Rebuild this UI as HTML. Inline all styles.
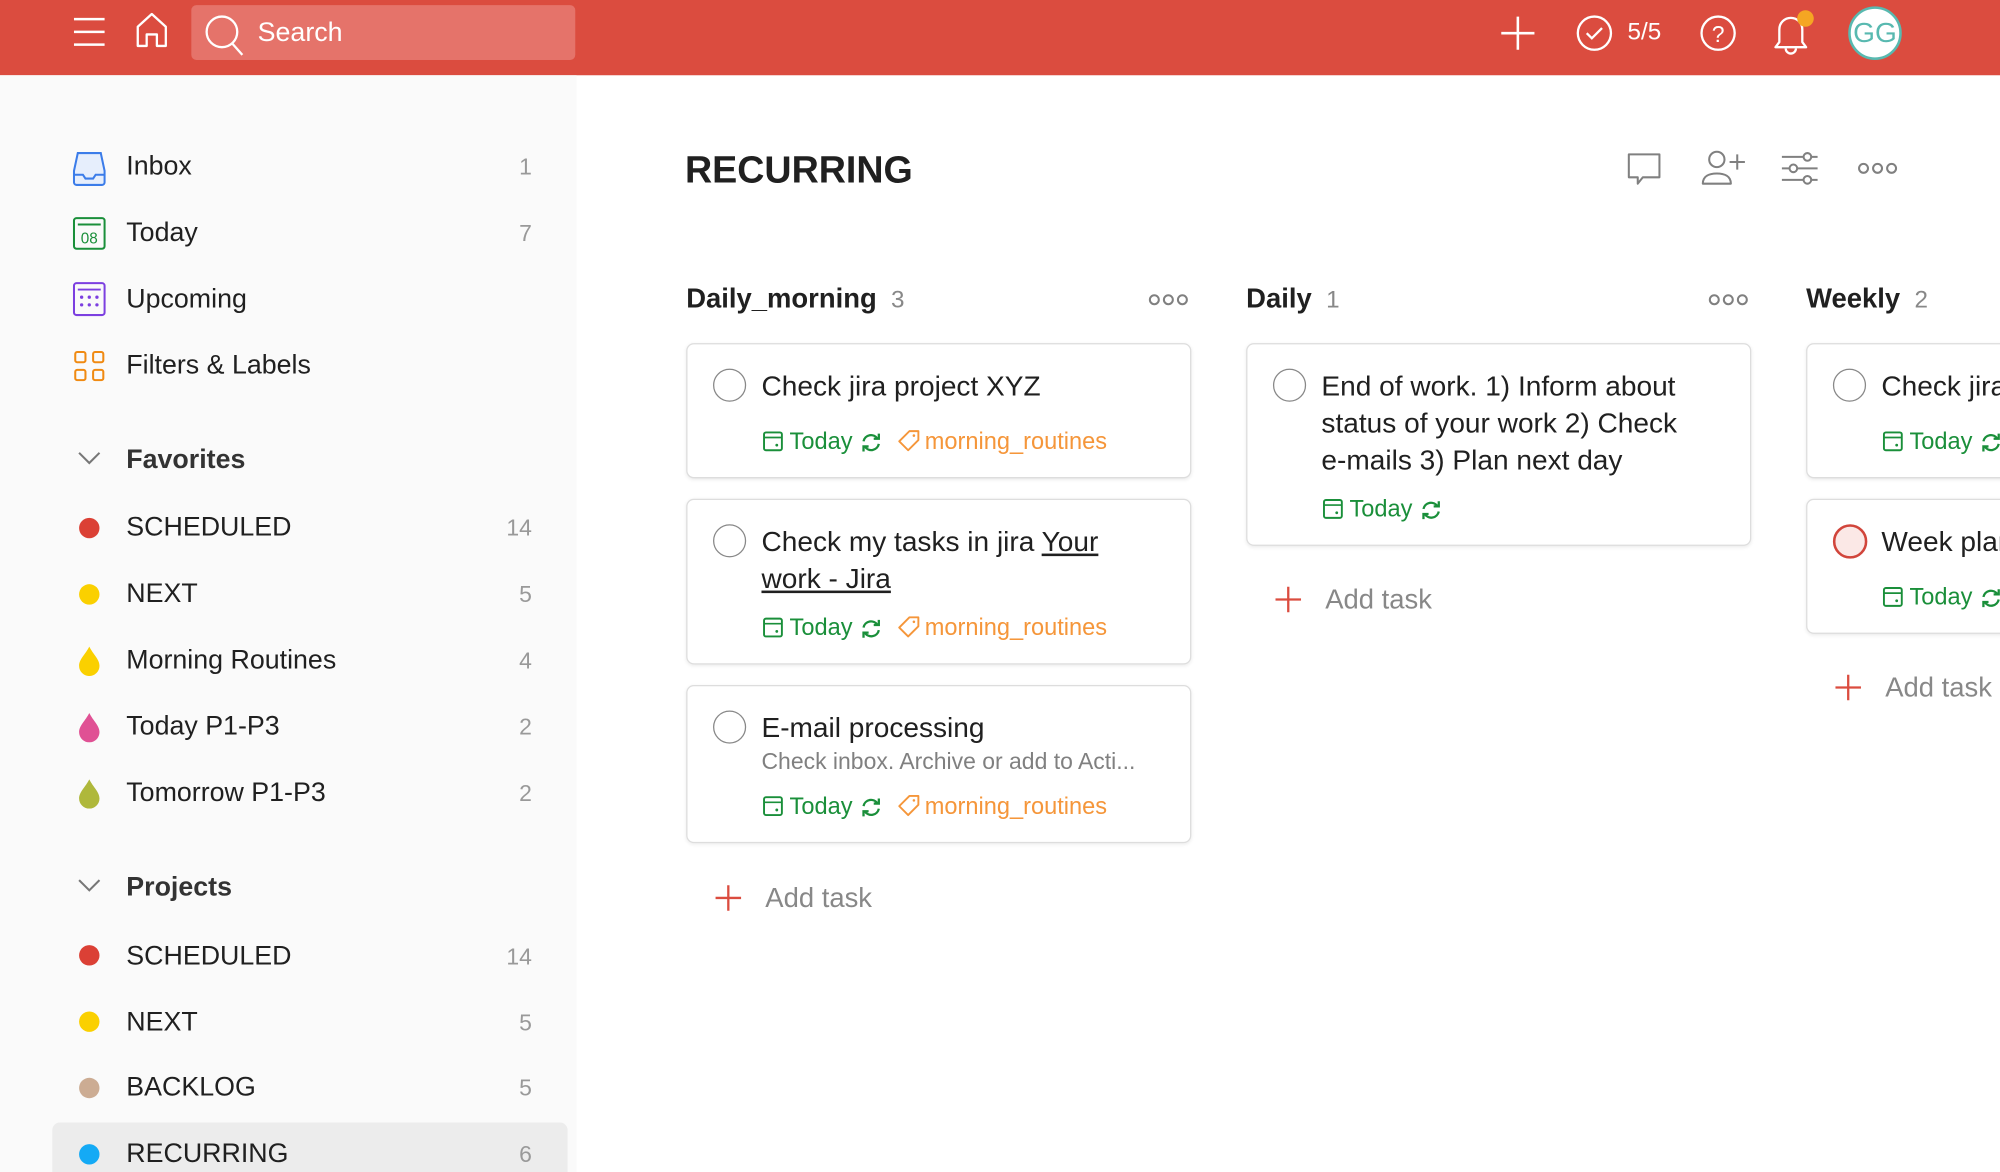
<!DOCTYPE html>
<html><head><meta charset="utf-8"><style>
html,body{margin:0;padding:0;width:2000px;height:1172px;overflow:hidden;background:#fff}
#w{position:absolute;left:0;top:0;width:1568px;height:919px;overflow:hidden;transform:scale(1.27551);transform-origin:0 0;font-family:"Liberation Sans",sans-serif;color:#202020}
.a{position:absolute}
.t{position:absolute;line-height:30px;height:30px;white-space:nowrap}
.sb{font-size:21px}
.cnt{position:absolute;font-size:18px;color:#999;line-height:30px;width:60px;text-align:right;left:357px}
.dot{position:absolute;width:16px;height:16px;border-radius:50%;left:62px}
.card{position:absolute;background:#fff;border:1px solid #ddd;border-radius:6px;box-shadow:0 1px 3px rgba(0,0,0,.08);width:394px}
.circ{position:absolute;width:24px;height:24px;border:1.6px solid #888;border-radius:50%}
.tt{font-size:22px;color:#202020}
.meta{font-size:18.5px;line-height:24px;height:24px}
.g{color:#1a8f3a}.o{color:#f5963a}
.colh{font-size:21.5px;font-weight:bold}
.add{font-size:21.5px;color:#888}
</style></head><body><div id="w">
<!-- header -->
<div class="a" style="left:0;top:0;width:1568px;height:59px;background:#db4c3f"></div>
<svg class="a" style="top:12px;left:56px" width="28" height="26" viewBox="0 0 28 26"><path d="M2 3h24M2 13h24M2 23h24" stroke="#fff" stroke-width="2"/></svg>
<svg class="a" style="left:104px;top:9px" width="30" height="30" viewBox="0 0 30 30"><path d="M4 27V12L15 2l11 10v15h-7v-9h-8v9z" fill="none" stroke="#fff" stroke-width="1.8" stroke-linejoin="round"/></svg>
<div class="a" style="left:150px;top:4px;width:301px;height:43px;background:#e5736a;border-radius:4px"></div>
<svg class="a" style="left:159px;top:11px" width="34" height="34" viewBox="0 0 34 34"><circle cx="15" cy="14" r="12" fill="none" stroke="#fff" stroke-width="1.8"/><path d="M23 23l8 9" stroke="#fff" stroke-width="1.8"/></svg>
<div class="t" style="left:202px;top:11px;font-size:21px;color:#fff">Search</div>
<svg class="a" style="left:1175px;top:11px" width="30" height="30" viewBox="0 0 30 30"><path d="M15 2v26M2 15h26" stroke="#fff" stroke-width="2"/></svg>
<svg class="a" style="left:1235px;top:11px" width="30" height="30" viewBox="0 0 30 30"><circle cx="15" cy="15" r="13" fill="none" stroke="#fff" stroke-width="1.8"/><path d="M9 15l4 4 8-8" fill="none" stroke="#fff" stroke-width="1.8"/></svg>
<div class="t" style="left:1276px;top:11px;font-size:19px;color:#fff">5/5</div>
<svg class="a" style="left:1332px;top:11px" width="30" height="30" viewBox="0 0 30 30"><circle cx="15" cy="15" r="13" fill="none" stroke="#fff" stroke-width="1.8"/><text x="15" y="22" text-anchor="middle" font-size="18" fill="#fff" font-family="Liberation Sans">?</text></svg>
<svg class="a" style="left:1388px;top:10px" width="32" height="34" viewBox="0 0 32 34"><path d="M4 27h24l-3-4V13a9 9 0 0 0-18 0v10z" fill="none" stroke="#fff" stroke-width="1.8" stroke-linejoin="round"/><path d="M12 28a4 4 0 0 0 8 0" fill="none" stroke="#fff" stroke-width="1.8"/></svg>
<div class="a" style="left:1409px;top:8px;width:13px;height:13px;border-radius:50%;background:#f5a623"></div>
<div class="a" style="left:1449px;top:5px;width:38px;height:38px;border-radius:50%;background:#fff;border:2px solid #58b9b0;color:#58b9b0;font-size:22px;line-height:38px;text-align:center">GG</div>
<!-- sidebar -->
<div class="a" style="left:0;top:59px;width:452px;height:860px;background:#fafafa"></div>
<svg class="a" style="left:57px;top:118px" width="26" height="28" viewBox="0 0 26 28"><path d="M4 2h18l3 14v9a2 2 0 0 1-2 2H3a2 2 0 0 1-2-2v-9z" fill="#e6eefc" stroke="#3b7ce9" stroke-width="1.6"/><path d="M1 19h7l2 3h6l2-3h7" fill="none" stroke="#3b7ce9" stroke-width="1.6"/></svg>
<div class="t sb" style="left:99px;top:116px">Inbox</div><div class="cnt" style="top:116px">1</div>
<svg class="a" style="left:57px;top:170px" width="26" height="26" viewBox="0 0 26 26"><rect x="1" y="1" width="24" height="24" rx="2" fill="none" stroke="#1a8f3a" stroke-width="1.6"/><path d="M4 6h18" stroke="#1a8f3a" stroke-width="1.5"/><text x="13" y="21" text-anchor="middle" font-size="12" fill="#1a8f3a" font-family="Liberation Sans">08</text></svg>
<div class="t sb" style="left:99px;top:168px">Today</div><div class="cnt" style="top:168px">7</div>
<svg class="a" style="left:57px;top:221px" width="26" height="27" viewBox="0 0 26 27"><rect x="1" y="1" width="24" height="25" rx="2" fill="none" stroke="#7c3fe0" stroke-width="1.6"/><path d="M4 6h18" stroke="#7c3fe0" stroke-width="1.5"/><g fill="#7c3fe0"><circle cx="7" cy="12" r="1.3"/><circle cx="13" cy="12" r="1.3"/><circle cx="19" cy="12" r="1.3"/><circle cx="7" cy="18" r="1.3"/><circle cx="13" cy="18" r="1.3"/><circle cx="19" cy="18" r="1.3"/></g></svg>
<div class="t sb" style="left:99px;top:220px">Upcoming</div>
<svg class="a" style="left:58px;top:275px" width="24" height="24" viewBox="0 0 24 24"><g fill="none" stroke="#f08a12" stroke-width="1.6"><rect x="1" y="1" width="8" height="8" rx="1.5"/><rect x="15" y="1" width="8" height="8" rx="1.5"/><rect x="1" y="15" width="8" height="8" rx="1.5"/><rect x="15" y="15" width="8" height="8" rx="1.5"/></g></svg>
<div class="t sb" style="left:99px;top:272px">Filters &amp; Labels</div>
<svg class="a" style="left:60px;top:352px" width="20" height="14" viewBox="0 0 20 14"><path d="M2 3l8 8 8-8" fill="none" stroke="#777" stroke-width="1.6"/></svg>
<div class="t sb" style="left:99px;top:346px;font-weight:bold;color:#333">Favorites</div>
<div class="dot" style="top:406px;background:#db4035"></div><div class="t sb" style="left:99px;top:399px">SCHEDULED</div><div class="cnt" style="top:399px">14</div>
<div class="dot" style="top:458px;background:#fad000"></div><div class="t sb" style="left:99px;top:451px">NEXT</div><div class="cnt" style="top:451px">5</div>
<svg class="a" style="left:61px;top:506px" width="18" height="24" viewBox="0 0 18 24"><path d="M9 1C6 7 1 11 1 16a8 8 0 0 0 16 0C17 11 12 7 9 1z" fill="#fad000"/></svg>
<div class="t sb" style="left:99px;top:503px">Morning Routines</div><div class="cnt" style="top:503px">4</div>
<svg class="a" style="left:61px;top:558px" width="18" height="24" viewBox="0 0 18 24"><path d="M9 1C6 7 1 11 1 16a8 8 0 0 0 16 0C17 11 12 7 9 1z" fill="#e05194"/></svg>
<div class="t sb" style="left:99px;top:555px">Today P1-P3</div><div class="cnt" style="top:555px">2</div>
<svg class="a" style="left:61px;top:610px" width="18" height="24" viewBox="0 0 18 24"><path d="M9 1C6 7 1 11 1 16a8 8 0 0 0 16 0C17 11 12 7 9 1z" fill="#afb83b"/></svg>
<div class="t sb" style="left:99px;top:607px">Tomorrow P1-P3</div><div class="cnt" style="top:607px">2</div>
<svg class="a" style="left:60px;top:687px" width="20" height="14" viewBox="0 0 20 14"><path d="M2 3l8 8 8-8" fill="none" stroke="#777" stroke-width="1.6"/></svg>
<div class="t sb" style="left:99px;top:681px;font-weight:bold;color:#333">Projects</div>
<div class="dot" style="top:741px;background:#db4035"></div><div class="t sb" style="left:99px;top:735px">SCHEDULED</div><div class="cnt" style="top:735px">14</div>
<div class="dot" style="top:793px;background:#fad000"></div><div class="t sb" style="left:99px;top:787px">NEXT</div><div class="cnt" style="top:787px">5</div>
<div class="dot" style="top:845px;background:#ccac93"></div><div class="t sb" style="left:99px;top:838px">BACKLOG</div><div class="cnt" style="top:838px">5</div>
<div class="a" style="left:41px;top:880px;width:404px;height:45px;background:#ececec;border-radius:6px"></div>
<div class="dot" style="top:897px;background:#14aaf5"></div><div class="t sb" style="left:99px;top:890px">RECURRING</div><div class="cnt" style="top:890px">6</div>
<!-- main -->
<div class="t" style="left:537px;top:117px;font-size:29.5px;font-weight:bold;line-height:34px;height:34px">RECURRING</div>
<svg class="a" style="left:1274px;top:118px" width="30" height="30" viewBox="0 0 30 30"><path d="M3 3h24v18H14l-4 5v-5H3z" fill="none" stroke="#808080" stroke-width="1.6" stroke-linejoin="round"/></svg>
<svg class="a" style="left:1333px;top:117px" width="36" height="30" viewBox="0 0 36 30"><circle cx="13" cy="8" r="6" fill="none" stroke="#808080" stroke-width="1.6"/><path d="M2 27c0-6 5-8 11-8s11 2 11 8z" fill="none" stroke="#808080" stroke-width="1.6" stroke-linejoin="round"/><path d="M29 4v12M23 10h12" stroke="#808080" stroke-width="1.6"/></svg>
<svg class="a" style="left:1396px;top:119px" width="30" height="26" viewBox="0 0 30 26"><g stroke="#808080" stroke-width="1.6" fill="#fff"><path d="M1 4h28M1 13h28M1 22h28"/><circle cx="21" cy="4" r="3"/><circle cx="10" cy="13" r="3"/><circle cx="21" cy="22" r="3"/></g></svg>
<svg class="a" style="left:1456px;top:124px" width="34" height="16" viewBox="0 0 34 16"><g fill="none" stroke="#808080" stroke-width="1.6"><circle cx="5" cy="8" r="3.5"/><circle cx="16" cy="8" r="3.5"/><circle cx="27" cy="8" r="3.5"/></g></svg>

<div class="t colh" style="left:538px;top:219px">Daily_morning <span style="font-weight:normal;color:#888;font-size:19px">&nbsp;3</span></div>
<svg class="a" style="left:900px;top:227px" width="34" height="16" viewBox="0 0 34 16"><g fill="none" stroke="#808080" stroke-width="1.6"><circle cx="5" cy="8" r="3.5"/><circle cx="16" cy="8" r="3.5"/><circle cx="27" cy="8" r="3.5"/></g></svg>
<div class="t colh" style="left:977px;top:219px">Daily <span style="font-weight:normal;color:#888;font-size:19px">&nbsp;1</span></div>
<svg class="a" style="left:1339px;top:227px" width="34" height="16" viewBox="0 0 34 16"><g fill="none" stroke="#808080" stroke-width="1.6"><circle cx="5" cy="8" r="3.5"/><circle cx="16" cy="8" r="3.5"/><circle cx="27" cy="8" r="3.5"/></g></svg>
<div class="t colh" style="left:1416px;top:219px">Weekly <span style="font-weight:normal;color:#888;font-size:19px">&nbsp;2</span></div>

<!-- col1 card1 -->
<div class="card" style="left:538px;top:269px;height:104px"></div>
<div class="circ" style="left:559px;top:289px"></div>
<div class="t tt" style="left:597px;top:288px">Check jira project XYZ</div>
<svg class="a" style="left:598px;top:338px" width="16" height="16" viewBox="0 0 16 16"><rect x="1" y="1" width="14" height="14" rx="1.5" fill="none" stroke="#1a8f3a" stroke-width="1.5"/><path d="M1 5h14" stroke="#1a8f3a" stroke-width="1.3"/><circle cx="11" cy="11" r="1.1" fill="#1a8f3a"/></svg>
<div class="t meta g" style="left:619px;top:334px">Today</div>
<svg class="a" style="left:674px;top:339px" width="18" height="16" viewBox="0 0 18 16"><path d="M3 7a6 6 0 0 1 11-2M15 9a6 6 0 0 1-11 2" fill="none" stroke="#1a8f3a" stroke-width="1.8"/><path d="M11 5h4V1M7 11H3v4" fill="none" stroke="#1a8f3a" stroke-width="1.8"/></svg>
<svg class="a" style="left:704px;top:337px" width="18" height="18" viewBox="0 0 18 18"><path d="M9 1h7v7l-8 8-7-7z" fill="none" stroke="#f5963a" stroke-width="1.5" stroke-linejoin="round"/><circle cx="12.5" cy="4.5" r="1" fill="#f5963a"/></svg>
<div class="t meta o" style="left:725px;top:334px">morning_routines</div>

<!-- col1 card2 -->
<div class="card" style="left:538px;top:391px;height:128px"></div>
<div class="circ" style="left:559px;top:411px"></div>
<div class="a tt" style="left:597px;top:410px;line-height:29px;width:285px">Check my tasks in jira <u>Your work - Jira</u></div>
<svg class="a" style="left:598px;top:484px" width="16" height="16" viewBox="0 0 16 16"><rect x="1" y="1" width="14" height="14" rx="1.5" fill="none" stroke="#1a8f3a" stroke-width="1.5"/><path d="M1 5h14" stroke="#1a8f3a" stroke-width="1.3"/><circle cx="11" cy="11" r="1.1" fill="#1a8f3a"/></svg>
<div class="t meta g" style="left:619px;top:480px">Today</div>
<svg class="a" style="left:674px;top:485px" width="18" height="16" viewBox="0 0 18 16"><path d="M3 7a6 6 0 0 1 11-2M15 9a6 6 0 0 1-11 2" fill="none" stroke="#1a8f3a" stroke-width="1.8"/><path d="M11 5h4V1M7 11H3v4" fill="none" stroke="#1a8f3a" stroke-width="1.8"/></svg>
<svg class="a" style="left:704px;top:483px" width="18" height="18" viewBox="0 0 18 18"><path d="M9 1h7v7l-8 8-7-7z" fill="none" stroke="#f5963a" stroke-width="1.5" stroke-linejoin="round"/><circle cx="12.5" cy="4.5" r="1" fill="#f5963a"/></svg>
<div class="t meta o" style="left:725px;top:480px">morning_routines</div>

<!-- col1 card3 -->
<div class="card" style="left:538px;top:537px;height:122px"></div>
<div class="circ" style="left:559px;top:557px"></div>
<div class="t tt" style="left:597px;top:556px">E-mail processing</div>
<div class="t" style="left:597px;top:582px;font-size:18px;color:#808080">Check inbox. Archive or add to Acti...</div>
<svg class="a" style="left:598px;top:624px" width="16" height="16" viewBox="0 0 16 16"><rect x="1" y="1" width="14" height="14" rx="1.5" fill="none" stroke="#1a8f3a" stroke-width="1.5"/><path d="M1 5h14" stroke="#1a8f3a" stroke-width="1.3"/><circle cx="11" cy="11" r="1.1" fill="#1a8f3a"/></svg>
<div class="t meta g" style="left:619px;top:620px">Today</div>
<svg class="a" style="left:674px;top:625px" width="18" height="16" viewBox="0 0 18 16"><path d="M3 7a6 6 0 0 1 11-2M15 9a6 6 0 0 1-11 2" fill="none" stroke="#1a8f3a" stroke-width="1.8"/><path d="M11 5h4V1M7 11H3v4" fill="none" stroke="#1a8f3a" stroke-width="1.8"/></svg>
<svg class="a" style="left:704px;top:623px" width="18" height="18" viewBox="0 0 18 18"><path d="M9 1h7v7l-8 8-7-7z" fill="none" stroke="#f5963a" stroke-width="1.5" stroke-linejoin="round"/><circle cx="12.5" cy="4.5" r="1" fill="#f5963a"/></svg>
<div class="t meta o" style="left:725px;top:620px">morning_routines</div>

<svg class="a" style="left:559px;top:692px" width="24" height="24" viewBox="0 0 24 24"><path d="M12 2v20M2 12h20" stroke="#db4c3f" stroke-width="1.8"/></svg>
<div class="t add" style="left:600px;top:689px">Add task</div>

<!-- col2 -->
<div class="card" style="left:977px;top:269px;height:157px"></div>
<div class="circ" style="left:998px;top:289px"></div>
<div class="a tt" style="left:1036px;top:288px;line-height:29px;width:300px">End of work. 1) Inform about status of your work 2) Check e&#8209;mails 3) Plan next day</div>
<svg class="a" style="left:1037px;top:391px" width="16" height="16" viewBox="0 0 16 16"><rect x="1" y="1" width="14" height="14" rx="1.5" fill="none" stroke="#1a8f3a" stroke-width="1.5"/><path d="M1 5h14" stroke="#1a8f3a" stroke-width="1.3"/><circle cx="11" cy="11" r="1.1" fill="#1a8f3a"/></svg>
<div class="t meta g" style="left:1058px;top:387px">Today</div>
<svg class="a" style="left:1113px;top:392px" width="18" height="16" viewBox="0 0 18 16"><path d="M3 7a6 6 0 0 1 11-2M15 9a6 6 0 0 1-11 2" fill="none" stroke="#1a8f3a" stroke-width="1.8"/><path d="M11 5h4V1M7 11H3v4" fill="none" stroke="#1a8f3a" stroke-width="1.8"/></svg>
<svg class="a" style="left:998px;top:458px" width="24" height="24" viewBox="0 0 24 24"><path d="M12 2v20M2 12h20" stroke="#db4c3f" stroke-width="1.8"/></svg>
<div class="t add" style="left:1039px;top:455px">Add task</div>

<!-- col3 -->
<div class="card" style="left:1416px;top:269px;height:104px"></div>
<div class="circ" style="left:1437px;top:289px"></div>
<div class="t tt" style="left:1475px;top:288px">Check jira project XYZ</div>
<svg class="a" style="left:1476px;top:338px" width="16" height="16" viewBox="0 0 16 16"><rect x="1" y="1" width="14" height="14" rx="1.5" fill="none" stroke="#1a8f3a" stroke-width="1.5"/><path d="M1 5h14" stroke="#1a8f3a" stroke-width="1.3"/><circle cx="11" cy="11" r="1.1" fill="#1a8f3a"/></svg>
<div class="t meta g" style="left:1497px;top:334px">Today</div>
<svg class="a" style="left:1552px;top:339px" width="18" height="16" viewBox="0 0 18 16"><path d="M3 7a6 6 0 0 1 11-2M15 9a6 6 0 0 1-11 2" fill="none" stroke="#1a8f3a" stroke-width="1.8"/><path d="M11 5h4V1M7 11H3v4" fill="none" stroke="#1a8f3a" stroke-width="1.8"/></svg>
<div class="card" style="left:1416px;top:391px;height:104px"></div>
<div class="circ" style="left:1437px;top:411px;border-color:#d1453b;border-width:2.2px;background:#fbe8e6;width:23px;height:23px"></div>
<div class="t tt" style="left:1475px;top:410px">Week planning</div>
<svg class="a" style="left:1476px;top:460px" width="16" height="16" viewBox="0 0 16 16"><rect x="1" y="1" width="14" height="14" rx="1.5" fill="none" stroke="#1a8f3a" stroke-width="1.5"/><path d="M1 5h14" stroke="#1a8f3a" stroke-width="1.3"/><circle cx="11" cy="11" r="1.1" fill="#1a8f3a"/></svg>
<div class="t meta g" style="left:1497px;top:456px">Today</div>
<svg class="a" style="left:1552px;top:461px" width="18" height="16" viewBox="0 0 18 16"><path d="M3 7a6 6 0 0 1 11-2M15 9a6 6 0 0 1-11 2" fill="none" stroke="#1a8f3a" stroke-width="1.8"/><path d="M11 5h4V1M7 11H3v4" fill="none" stroke="#1a8f3a" stroke-width="1.8"/></svg>
<svg class="a" style="left:1437px;top:527px" width="24" height="24" viewBox="0 0 24 24"><path d="M12 2v20M2 12h20" stroke="#db4c3f" stroke-width="1.8"/></svg>
<div class="t add" style="left:1478px;top:524px">Add task</div>
</div></body></html>
